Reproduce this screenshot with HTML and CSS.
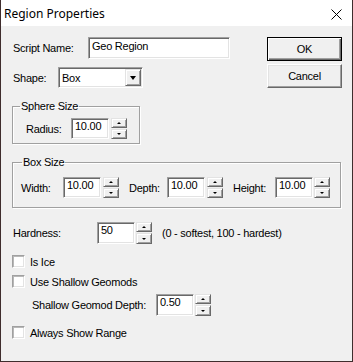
FILE: index.html
```html
<!DOCTYPE html>
<html lang="en">
<head>
    <meta charset="UTF-8">
    <title>Region Properties</title>
    <link rel="stylesheet" href="styles.css">
</head>
<body>
    <div class="window">
        <div class="titlebar">
            <span class="title">Region Properties</span>
            <svg class="close" width="11" height="11" viewBox="0 0 11 11">
                <path d="M0.5 0.5 L10.5 10.5 M10.5 0.5 L0.5 10.5" stroke="#000" stroke-width="1" fill="none"/>
            </svg>
        </div>

        <div class="content">
            <div class="top">
                <div class="fields">
                    <div class="row">
                        <label class="lbl w-name">Script Name:</label>
                        <div class="edit edit-name">Geo Region</div>
                    </div>
                    <div class="row">
                        <label class="lbl w-shape">Shape:</label>
                        <div class="combo">
                            <span class="combo-text">Box</span>
                            <span class="drop"><i class="tri-down"></i></span>
                        </div>
                    </div>
                </div>
                <div class="buttons">
                    <button class="btn btn-default">OK</button>
                    <button class="btn">Cancel</button>
                </div>
            </div>

            <fieldset class="group group-sphere">
                <legend>Sphere Size</legend>
                <div class="row">
                    <label class="lbl w-radius">Radius:</label>
                    <div class="edit edit-num">10.00</div>
                    <div class="spin">
                        <span class="spin-btn"><i class="tri-up"></i></span>
                        <span class="spin-btn"><i class="tri-dn"></i></span>
                    </div>
                </div>
            </fieldset>

            <fieldset class="group group-box">
                <legend>Box Size</legend>
                <div class="row">
                    <label class="lbl w-width">Width:</label>
                    <div class="edit edit-num">10.00</div>
                    <div class="spin">
                        <span class="spin-btn"><i class="tri-up"></i></span>
                        <span class="spin-btn"><i class="tri-dn"></i></span>
                    </div>
                    <label class="lbl w-depth gap-l">Depth:</label>
                    <div class="edit edit-num">10.00</div>
                    <div class="spin">
                        <span class="spin-btn"><i class="tri-up"></i></span>
                        <span class="spin-btn"><i class="tri-dn"></i></span>
                    </div>
                    <label class="lbl w-height gap-l">Height:</label>
                    <div class="edit edit-num">10.00</div>
                    <div class="spin spin-tight">
                        <span class="spin-btn"><i class="tri-up"></i></span>
                        <span class="spin-btn"><i class="tri-dn"></i></span>
                    </div>
                </div>
            </fieldset>

            <div class="row row-hardness">
                <label class="lbl w-hard">Hardness:</label>
                <div class="edit edit-num tall">50</div>
                <div class="spin spin-tight tall">
                    <span class="spin-btn"><i class="tri-up"></i></span>
                    <span class="spin-btn"><i class="tri-dn"></i></span>
                </div>
                <span class="hint">(0 - softest, 100 - hardest)</span>
            </div>

            <div class="check-row first">
                <span class="check"></span>
                <span>Is Ice</span>
            </div>
            <div class="check-row">
                <span class="check"></span>
                <span>Use Shallow Geomods</span>
            </div>

            <div class="row row-depth">
                <label class="lbl w-geodepth">Shallow Geomod Depth:</label>
                <div class="edit edit-num tall">0.50</div>
                <div class="spin spin-tight tall">
                    <span class="spin-btn"><i class="tri-up"></i></span>
                    <span class="spin-btn"><i class="tri-dn"></i></span>
                </div>
            </div>

            <div class="check-row last">
                <span class="check"></span>
                <span>Always Show Range</span>
            </div>
        </div>
    </div>
</body>
</html>
```

FILE: styles.css
```css
body {
    margin: 0;
    background: #ffffff;
}
.window {
    width: 353px;
    height: 362px;
    box-sizing: border-box;
    border: 1px solid #3f2d2d;
    border-top: none;
    background: #f0f0f0;
    font-family: "Liberation Sans", Arial, sans-serif;
    font-size: 11px;
    letter-spacing: -0.25px;
    color: #000000;
    overflow: hidden;
}
.titlebar {
    height: 26px;
    background: #ffffff;
    display: flex;
    align-items: center;
    justify-content: space-between;
    padding: 0 10px 0 3px;
    font-family: "Noto Sans", sans-serif;
    font-size: 12px;
    letter-spacing: 0;
}
.close {
    display: block;
    margin-top: 2px;
}
.content {
    padding: 11px 10px 0 12px;
}
.top {
    display: flex;
    justify-content: space-between;
}
.fields {
    display: flex;
    flex-direction: column;
    gap: 8px;
}
.row {
    display: flex;
    align-items: center;
}
.lbl {
    flex: none;
    white-space: nowrap;
}
.w-name { width: 75px; }
.w-shape { width: 45px; }
.w-radius { width: 45px; }
.w-width { width: 42px; }
.w-depth { width: 38px; }
.w-height { width: 42px; }
.w-hard { width: 84px; }
.w-geodepth { width: 124px; }
.gap-l { margin-left: 10px; }

/* sunken edit box */
.edit {
    box-sizing: border-box;
    height: 21px;
    border: 1px solid;
    border-color: #a0a0a0 #ffffff #ffffff #a0a0a0;
    box-shadow: inset 1px 1px 0 #696969, inset -1px -1px 0 #e3e3e3;
    background: #ffffff;
    padding: 1px 2px 0 3px;
    line-height: 13px;
    white-space: nowrap;
}
.edit-name {
    width: 142px;
    height: 22px;
    padding-top: 2px;
}
.edit-num {
    width: 38px;
}
.tall {
    height: 22px;
}

.combo {
    box-sizing: border-box;
    width: 85px;
    height: 21px;
    border: 1px solid;
    border-color: #a0a0a0 #ffffff #ffffff #a0a0a0;
    box-shadow: inset 1px 1px 0 #696969, inset -1px -1px 0 #e3e3e3;
    background: #ffffff;
    display: flex;
    align-items: center;
    justify-content: space-between;
    padding: 1px 1px 1px 3px;
}
.drop {
    box-sizing: border-box;
    width: 16px;
    height: 17px;
    border: 1px solid;
    border-color: #e3e3e3 #696969 #696969 #e3e3e3;
    box-shadow: inset 1px 1px 0 #ffffff, inset -1px -1px 0 #a0a0a0;
    background: #f0f0f0;
    display: flex;
    align-items: center;
    justify-content: center;
}
.tri-down {
    width: 0;
    height: 0;
    border-left: 3.5px solid transparent;
    border-right: 3.5px solid transparent;
    border-top: 4px solid #000000;
    margin-top: 1px;
}

/* buttons */
.buttons {
    display: flex;
    flex-direction: column;
    gap: 3px;
    width: 75px;
}
.btn {
    box-sizing: border-box;
    height: 24px;
    font: inherit;
    letter-spacing: inherit;
    color: #000000;
    background: #f0f0f0;
    border: 1px solid;
    border-color: #ffffff #696969 #696969 #ffffff;
    box-shadow: inset -1px -1px 0 #a0a0a0, inset 1px 1px 0 #e3e3e3;
    padding: 0;
}
.btn-default {
    border-color: #000000;
    box-shadow: inset 1px 1px 0 #ffffff, inset -1px -1px 0 #696969, inset -2px -2px 0 #a0a0a0;
}

/* spinner */
.spin {
    display: flex;
    flex-direction: column;
    gap: 1px;
    margin-left: 2px;
}
.spin-tight {
    margin-left: 1px;
}
.spin-btn {
    box-sizing: border-box;
    width: 16px;
    height: 10px;
    border: 1px solid;
    border-color: #e3e3e3 #696969 #696969 #e3e3e3;
    box-shadow: inset 1px 1px 0 #ffffff, inset -1px -1px 0 #a0a0a0;
    background: #f0f0f0;
    display: flex;
    align-items: center;
    justify-content: center;
}
.spin.tall .spin-btn:last-child {
    height: 11px;
}
.tri-up,
.tri-dn {
    width: 0;
    height: 0;
    border-left: 2px solid transparent;
    border-right: 2px solid transparent;
}
.tri-up {
    border-bottom: 2px solid #000000;
}
.tri-dn {
    border-top: 2px solid #000000;
}

/* group boxes */
.group {
    margin: 0 0 0 -1px;
    border: 1px solid #a0a0a0;
    box-shadow: 1px 1px 0 #ffffff, inset 1px 1px 0 #ffffff;
    min-width: 0;
}
.group legend {
    padding: 0 1px;
    margin-left: -6px;
    line-height: 13px;
}
.group-sphere {
    margin-top: 12px;
    width: 128px;
    box-sizing: border-box;
    padding: 5px 0 4px 13px;
}
.group-box {
    margin-top: 12px;
    width: 329px;
    box-sizing: border-box;
    padding: 8px 0 9px 8px;
}
.group-box legend {
    margin-left: 1px;
}

.row-hardness {
    margin-top: 14px;
}
.hint {
    margin-left: 10px;
}

.check-row {
    display: flex;
    align-items: center;
    height: 13px;
    margin-top: 7px;
    margin-left: -1px;
}
.check-row.first {
    margin-top: 11px;
}
.check-row.last {
    margin-top: 10px;
}
.check {
    box-sizing: border-box;
    width: 13px;
    height: 13px;
    border: 1px solid;
    border-color: #a0a0a0 #ffffff #ffffff #a0a0a0;
    box-shadow: inset 1px 1px 0 #b8b8b8, inset -1px -1px 0 #e3e3e3;
    background: #ffffff;
    margin-right: 5px;
}
.row-depth {
    margin-top: 6px;
    padding-left: 19px;
}
```
